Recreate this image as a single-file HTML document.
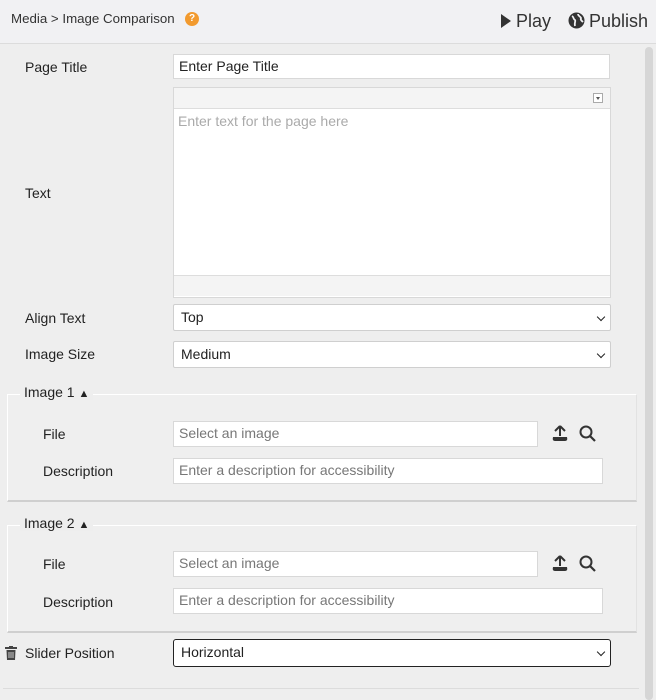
<!DOCTYPE html>
<html><head><style>
*{box-sizing:border-box}
body{margin:0;width:656px;height:700px;overflow:hidden;background:#eeeeee;font-family:"Liberation Sans",sans-serif;font-size:14px;color:#222;position:relative}
.hdr{position:absolute;left:0;top:0;width:656px;height:44px;background:#f1f1f3;border-bottom:1px solid #dcdcdc}
.a{position:absolute}
.lbl{position:absolute;font-size:14px;color:#222}
.inp{position:absolute;background:#fff;border:1px solid #d8d8d8;font-size:14px;padding-left:5px;line-height:23px}
.ph{color:#777}
.sel{position:absolute;background:#fff;border:1px solid #cfcfcf;border-radius:2px;font-size:14px;padding-left:7px;line-height:25px}
.sel:after{content:"";position:absolute;right:6px;top:9px;width:5px;height:5px;border-right:1.6px solid #222;border-bottom:1.6px solid #222;transform:rotate(45deg)}
.fs{position:absolute;left:7px;width:630px;border:1px solid #fff;border-bottom:2px solid #cfcfcf;border-right:1px solid #e2e2e2;background:#efefef}
.leg{position:absolute;background:#eeeeee;padding:0 4px;font-size:14px}
</style></head><body>
<div class="hdr">
<div class="a" style="left:11px;top:11px;font-size:13.3px;color:#333">Media &gt; Image Comparison</div>
<div class="a" style="left:185px;top:12px;width:14px;height:14px;border-radius:50%;background:#f29a2e;color:#fff;font-size:10px;font-weight:bold;text-align:center;line-height:14px">?</div>
<svg class="a" style="left:500px;top:13px" width="12" height="16"><path d="M1 1 L11 8 L1 15Z" fill="#333"/></svg>
<div class="a" style="left:516px;top:11px;font-size:18px;color:#333">Play</div>
<svg class="a" style="left:568px;top:12px" width="17" height="17" viewBox="0 0 17 17"><circle cx="8.5" cy="8.5" r="8" fill="#333"/><path d="M4 4 C6 5 5 7 7 8 C8 9 6 11 7 14 M10 2 C10 4 12 4 13 6 C12 8 14 9 15 10" stroke="#f1f1f3" stroke-width="1.8" fill="none"/></svg>
<div class="a" style="left:589px;top:11px;font-size:18px;color:#333">Publish</div>
</div>
<div class="a" style="left:645px;top:47px;width:8px;height:653px;background:#d6d6d6;border-radius:4px"></div>

<div class="lbl" style="left:25px;top:59px">Page Title</div>
<div class="inp" style="left:173px;top:54px;width:437px;height:25px">Enter Page Title</div>

<div class="lbl" style="left:25px;top:185px">Text</div>
<div class="a" style="left:173px;top:87px;width:438px;height:211px;border:1px solid #d8d8d8;background:#fff">
<div style="height:21px;background:#f4f4f4;border-bottom:1px solid #ddd;position:relative"><div class="a" style="right:7px;top:5px;width:10px;height:10px;border:1px solid #aaa;background:#fff"><div style="margin:3px auto 0;width:0;height:0;border-left:2px solid transparent;border-right:2px solid transparent;border-top:3px solid #555"></div></div></div>
<div style="padding:4px 4px;color:#aaa;font-size:14px;height:166px">Enter text for the page here</div>
<div style="height:21px;background:#f4f4f4;border-top:1px solid #ddd"></div>
</div>

<div class="lbl" style="left:25px;top:310px">Align Text</div>
<div class="sel" style="left:173px;top:304px;width:438px;height:27px">Top</div>
<div class="lbl" style="left:25px;top:346px">Image Size</div>
<div class="sel" style="left:173px;top:341px;width:438px;height:27px">Medium</div>

<div class="fs" style="top:394px;height:108px"></div>
<div class="leg" style="left:20px;top:384px">Image 1 <span style="font-size:11px">▲</span></div>
<div class="lbl" style="left:43px;top:426px">File</div>
<div class="inp ph" style="left:173px;top:421px;width:365px;height:26px">Select an image</div>
<div class="lbl" style="left:43px;top:463px">Description</div>
<div class="inp ph" style="left:173px;top:458px;width:430px;height:26px">Enter a description for accessibility</div>

<div class="fs" style="top:525px;height:108px"></div>
<div class="leg" style="left:20px;top:515px">Image 2 <span style="font-size:11px">▲</span></div>
<div class="lbl" style="left:43px;top:556px">File</div>
<div class="inp ph" style="left:173px;top:551px;width:365px;height:26px">Select an image</div>
<div class="lbl" style="left:43px;top:594px">Description</div>
<div class="inp ph" style="left:173px;top:588px;width:430px;height:26px">Enter a description for accessibility</div>

<svg class="a" style="left:551px;top:424px" width="50" height="20"><path d="M9 2 L4 7 M9 2 L14 7 M9 2 V12" stroke="#333" stroke-width="2" fill="none"/><path d="M2 13 H16 Q17 17 14 17 H4 Q1 17 2 13Z" fill="#333"/><circle cx="35" cy="8" r="5.5" stroke="#333" stroke-width="2" fill="none"/><path d="M39 12 L44 17" stroke="#333" stroke-width="2.2"/></svg>
<svg class="a" style="left:551px;top:554px" width="50" height="20"><path d="M9 2 L4 7 M9 2 L14 7 M9 2 V12" stroke="#333" stroke-width="2" fill="none"/><path d="M2 13 H16 Q17 17 14 17 H4 Q1 17 2 13Z" fill="#333"/><circle cx="35" cy="8" r="5.5" stroke="#333" stroke-width="2" fill="none"/><path d="M39 12 L44 17" stroke="#333" stroke-width="2.2"/></svg>

<svg class="a" style="left:5px;top:646px" width="12" height="14"><rect x="0" y="1" width="12" height="2" fill="#444"/><rect x="4" y="0" width="4" height="2" fill="#444"/><path d="M1.5 4 H10.5 L10 14 H2Z" fill="#444"/><path d="M4 6 V12 M6 6 V12 M8 6 V12" stroke="#eee" stroke-width="0.8"/></svg>
<div class="lbl" style="left:25px;top:645px">Slider Position</div>
<div class="sel" style="left:173px;top:639px;width:438px;height:28px;border:1.5px solid #222;border-radius:3px">Horizontal</div>
<div class="a" style="left:3px;top:688px;width:636px;height:1px;background:#dcdcdc"></div>
</body></html>
